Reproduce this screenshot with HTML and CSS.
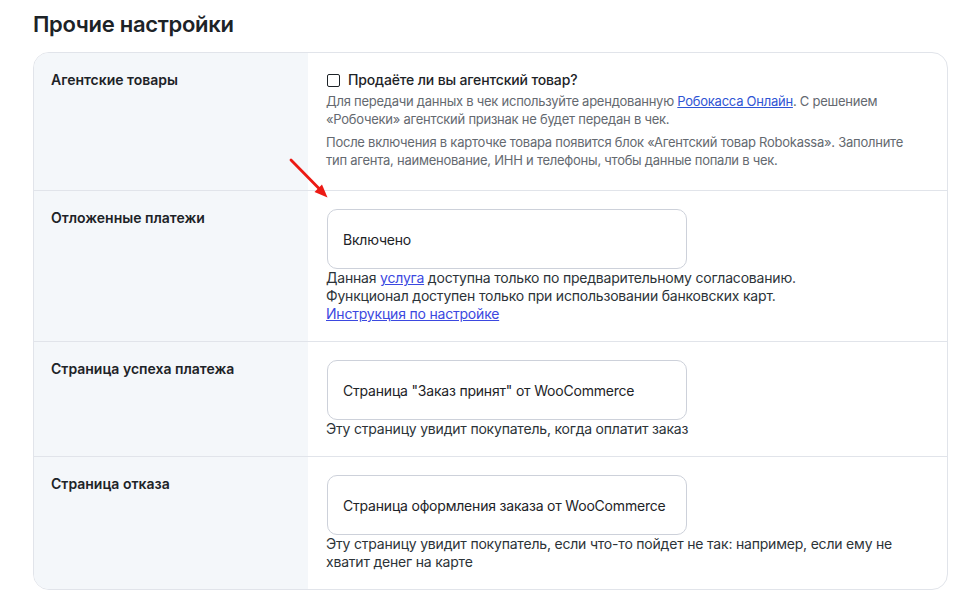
FILE: index.html
```html
<!DOCTYPE html>
<html lang="ru">
<head>
<meta charset="utf-8">
<title>Прочие настройки</title>
<link rel="stylesheet" href="styles.css">
</head>
<body>
<div class="page">
  <h2 class="title">Прочие настройки</h2>
  <div class="card">
    <div class="row">
      <div class="label">Агентские товары</div>
      <div class="field">
        <label class="check"><span class="box"></span>Продаёте ли вы агентский товар?</label>
        <p class="hint">Для передачи данных в чек используйте арендованную <a href="#">Робокасса Онлайн</a>. С решением «Робочеки» агентский признак не будет передан в чек.</p>
        <p class="hint last">После включения в карточке товара появится блок «Агентский товар Robokassa». Заполните тип агента, наименование, ИНН и телефоны, чтобы данные попали в чек.</p>
      </div>
    </div>
    <div class="row">
      <div class="label">Отложенные платежи</div>
      <div class="field">
        <div class="select">Включено</div>
        <div class="desc">Данная <a class="lnk" href="#">услуга</a> доступна только по предварительному согласованию.<br>Функционал доступен только при использовании банковских карт.<br><a class="lnk" href="#">Инструкция по настройке</a></div>
      </div>
    </div>
    <div class="row">
      <div class="label">Страница успеха платежа</div>
      <div class="field">
        <div class="select">Страница "Заказ принят" от WooCommerce</div>
        <div class="desc">Эту страницу увидит покупатель, когда оплатит заказ</div>
      </div>
    </div>
    <div class="row">
      <div class="label">Страница отказа</div>
      <div class="field">
        <div class="select">Страница оформления заказа от WooCommerce</div>
        <div class="desc">Эту страницу увидит покупатель, если что-то пойдет не так: например, если ему не хватит денег на карте</div>
      </div>
    </div>
  </div>
  <svg class="arrow" width="50" height="50" viewBox="0 0 50 50">
    <line x1="4" y1="3" x2="32" y2="31.5" stroke="#ec1a14" stroke-width="2.8" stroke-linecap="round"/>
    <polygon points="40.5,40.5 27.5,35 35,27.5" fill="#ec1a14"/>
  </svg>
</div>
</body>
</html>
```
FILE: styles.css
```css
html, body {
  margin: 0;
  padding: 0;
  background: #ffffff;
}
body {
  font-family: Inter, "Noto Sans", "Liberation Sans", sans-serif;
  color: #1d2327;
}
.page {
  position: relative;
  padding: 9px 28px 0 33px;
}
.title {
  margin: 0 0 13px 0;
  font-size: 22px;
  line-height: 30px;
  font-weight: 600;
  letter-spacing: -0.3px;
  color: #1d2327;
}
.card {
  border: 1px solid #e1e4ea;
  border-radius: 16px;
  overflow: hidden;
  background: #ffffff;
}
.row {
  display: grid;
  grid-template-columns: 274px 1fr;
  border-top: 1px solid #e1e4ea;
}
.row:first-child {
  border-top: none;
}
.label {
  background: #f4f7fa;
  padding: 18px 17px;
  font-size: 14px;
  line-height: 18px;
  font-weight: 600;
  color: #1d2327;
}
.field {
  padding: 18px 18px 18px 18px;
}
.check {
  display: flex;
  align-items: center;
  gap: 8px;
  font-size: 14px;
  line-height: 18px;
  font-weight: 500;
  letter-spacing: -0.15px;
  color: #1d2327;
  margin-bottom: 3px;
}
.box {
  width: 11px;
  height: 11px;
  border: 1.5px solid #1d2327;
  border-radius: 2px;
  background: #fff;
  flex: none;
  margin-left: 1px;
}
.hint {
  margin: 0 0 5px 0;
  max-width: 600px;
  font-size: 13px;
  line-height: 18px;
  letter-spacing: -0.25px;
  color: #646970;
}
.hint.last {
  margin-bottom: 3px;
}
.hint a {
  color: #2f55d4;
  text-decoration: underline;
}
.select {
  box-sizing: border-box;
  width: 360px;
  height: 60px;
  margin-left: 1px;
  border: 1px solid #cdd1da;
  border-radius: 10px;
  padding: 0 15px;
  display: flex;
  align-items: center;
  white-space: nowrap;
  font-size: 14px;
  letter-spacing: -0.2px;
  color: #1d2327;
}
.desc {
  max-width: 600px;
  font-size: 14px;
  line-height: 18px;
  letter-spacing: -0.2px;
  color: #2c3338;
}
.lnk {
  color: #3b48e0;
  text-decoration: underline;
}
.arrow {
  position: absolute;
  left: 287px;
  top: 157px;
}
```
